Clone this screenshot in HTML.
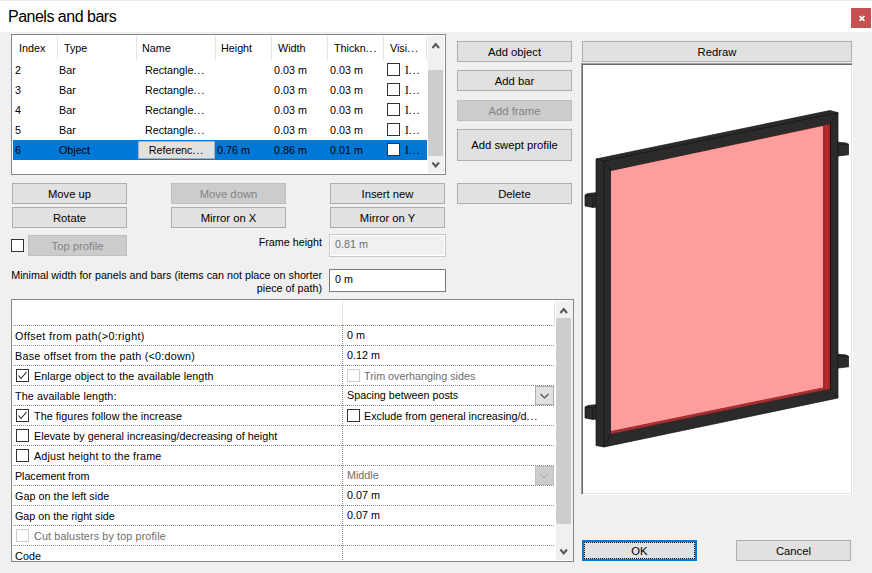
<!DOCTYPE html>
<html><head><meta charset="utf-8">
<style>
*{box-sizing:border-box;margin:0;padding:0}
html,body{width:872px;height:573px;overflow:hidden;background:#f0f0f0}
body{position:relative;font-family:"Liberation Sans",sans-serif;font-size:10.75px;color:#000}
.t{position:absolute;white-space:nowrap;line-height:13px}
.title{position:absolute;left:0;top:0;width:872px;height:32px;background:#fff;border-top:1px solid #ececec}
.title span{position:absolute;left:8px;top:6px;font-size:16px;line-height:19px;letter-spacing:-0.5px;color:#000}
.close{position:absolute;left:851px;top:8px;width:20px;height:20px;background:#c75050}
.btn{position:absolute;padding-top:1px;font-size:11.25px;background:#e1e1e1;border:1px solid #adadad;text-align:center;color:#000;white-space:nowrap}
.btn.dis{background:#cccccc;border-color:#bfbfbf;color:#838383}
.box{position:absolute;background:#fff;border:1px solid #828790}
.cb{position:absolute;width:13px;height:13px;border:1px solid #333;background:#fff}
.sb{position:absolute;background:#f0f0f0}
.th{position:absolute;background:#cdcdcd}
.dl{position:absolute;height:1px;background-image:linear-gradient(to right,#8a8a8a 50%,transparent 50%);background-size:2px 1px}
.dv{position:absolute;width:1px;background-image:linear-gradient(to bottom,#8a8a8a 50%,transparent 50%);background-size:1px 2px}
</style></head><body>
<div class="title"><span>Panels and bars</span></div>
<div class="close"><svg width="20" height="20" style="position:absolute;left:0;top:0"><path d="M8.6 8L13.4 12.8M13.4 8L8.6 12.8" stroke="#fff" stroke-width="1.7"/></svg></div>

<!-- list -->
<div class="box" style="left:11px;top:34px;width:435px;height:141px"></div>
<!-- header separators -->
<div style="position:absolute;left:57px;top:36px;width:1px;height:24px;background:#e5e5e5"></div>
<div style="position:absolute;left:136px;top:36px;width:1px;height:24px;background:#e5e5e5"></div>
<div style="position:absolute;left:215px;top:36px;width:1px;height:24px;background:#e5e5e5"></div>
<div style="position:absolute;left:271px;top:36px;width:1px;height:24px;background:#e5e5e5"></div>
<div style="position:absolute;left:327px;top:36px;width:1px;height:24px;background:#e5e5e5"></div>
<div style="position:absolute;left:383px;top:36px;width:1px;height:24px;background:#e5e5e5"></div>
<div style="position:absolute;left:426px;top:36px;width:1px;height:24px;background:#e5e5e5"></div>
<div class="t" style="left:19px;top:42px">Index</div>
<div class="t" style="left:64px;top:42px">Type</div>
<div class="t" style="left:142px;top:42px">Name</div>
<div class="t" style="left:221px;top:42px">Height</div>
<div class="t" style="left:278px;top:42px">Width</div>
<div class="t" style="left:334px;top:42px">Thickn<span style="letter-spacing:0.9px">...</span></div>
<div class="t" style="left:390px;top:42px">Visi<span style="letter-spacing:0.9px">...</span></div>

<div class="t" style="left:15px;top:64px">2</div><div class="t" style="left:59px;top:64px">Bar</div><div class="t" style="left:145px;top:64px">Rectangle<span style="letter-spacing:0.9px">...</span></div><div class="t" style="left:274px;top:64px">0.03 m</div><div class="t" style="left:330px;top:64px">0.03 m</div><div class="cb" style="left:387px;top:63px"></div><div class="t" style="left:405px;top:64px"><span style="font-family:'Liberation Serif',serif;font-size:11.5px">I</span><span style="letter-spacing:0.9px">...</span></div>
<div class="t" style="left:15px;top:84px">3</div><div class="t" style="left:59px;top:84px">Bar</div><div class="t" style="left:145px;top:84px">Rectangle<span style="letter-spacing:0.9px">...</span></div><div class="t" style="left:274px;top:84px">0.03 m</div><div class="t" style="left:330px;top:84px">0.03 m</div><div class="cb" style="left:387px;top:83px"></div><div class="t" style="left:405px;top:84px"><span style="font-family:'Liberation Serif',serif;font-size:11.5px">I</span><span style="letter-spacing:0.9px">...</span></div>
<div class="t" style="left:15px;top:104px">4</div><div class="t" style="left:59px;top:104px">Bar</div><div class="t" style="left:145px;top:104px">Rectangle<span style="letter-spacing:0.9px">...</span></div><div class="t" style="left:274px;top:104px">0.03 m</div><div class="t" style="left:330px;top:104px">0.03 m</div><div class="cb" style="left:387px;top:103px"></div><div class="t" style="left:405px;top:104px"><span style="font-family:'Liberation Serif',serif;font-size:11.5px">I</span><span style="letter-spacing:0.9px">...</span></div>
<div class="t" style="left:15px;top:124px">5</div><div class="t" style="left:59px;top:124px">Bar</div><div class="t" style="left:145px;top:124px">Rectangle<span style="letter-spacing:0.9px">...</span></div><div class="t" style="left:274px;top:124px">0.03 m</div><div class="t" style="left:330px;top:124px">0.03 m</div><div class="cb" style="left:387px;top:123px"></div><div class="t" style="left:405px;top:124px"><span style="font-family:'Liberation Serif',serif;font-size:11.5px">I</span><span style="letter-spacing:0.9px">...</span></div>
<!-- selected -->
<div style="position:absolute;left:13px;top:140px;width:414px;height:20px;background:#0078d7"></div>
<div class="btn" style="left:138px;top:141px;width:77px;height:18px;line-height:16px;padding-top:0;font-size:10.75px">Referenc<span style="letter-spacing:0.9px">...</span></div>
<div class="t" style="left:15px;top:144px">6</div><div class="t" style="left:59px;top:144px">Object</div><div class="t" style="left:217px;top:144px">0.76 m</div><div class="t" style="left:274px;top:144px">0.86 m</div><div class="t" style="left:330px;top:144px">0.01 m</div><div class="cb" style="left:387px;top:143px"></div><div class="t" style="left:405px;top:144px"><span style="font-family:'Liberation Serif',serif;font-size:11.5px">I</span><span style="letter-spacing:0.9px">...</span></div>
<!-- list scrollbar -->
<div class="sb" style="left:428px;top:36px;width:16px;height:137px"></div>
<div class="th" style="left:428px;top:70px;width:15px;height:86px"></div>
<svg style="position:absolute;left:427px;top:38px" width="17" height="14"><path d="M5.4 10L8.7 6L12 10" stroke="#555" stroke-width="2" fill="none"/></svg>
<svg style="position:absolute;left:427px;top:158px" width="17" height="14"><path d="M5.4 4.5L8.7 8.5L12 4.5" stroke="#555" stroke-width="2" fill="none"/></svg>

<!-- right buttons -->
<div class="btn" style="left:457px;top:41px;width:115px;height:21px;line-height:19px">Add object</div>
<div class="btn" style="left:457px;top:70px;width:115px;height:21px;line-height:19px">Add bar</div>
<div class="btn dis" style="left:457px;top:100px;width:115px;height:21px;line-height:19px">Add frame</div>
<div class="btn" style="left:457px;top:129px;width:115px;height:32px;line-height:28px">Add swept profile</div>

<div class="btn" style="left:582px;top:41px;width:270px;height:21px;line-height:19px">Redraw</div>

<!-- buttons rows -->
<div class="btn" style="left:12px;top:183px;width:115px;height:21px;line-height:19px">Move up</div>
<div class="btn dis" style="left:171px;top:183px;width:115px;height:21px;line-height:19px">Move down</div>
<div class="btn" style="left:330px;top:183px;width:115px;height:21px;line-height:19px">Insert new</div>
<div class="btn" style="left:457px;top:183px;width:115px;height:21px;line-height:19px">Delete</div>
<div class="btn" style="left:12px;top:207px;width:115px;height:21px;line-height:19px">Rotate</div>
<div class="btn" style="left:171px;top:207px;width:115px;height:21px;line-height:19px">Mirror on X</div>
<div class="btn" style="left:330px;top:207px;width:115px;height:21px;line-height:19px">Mirror on Y</div>
<div class="cb" style="left:11px;top:239px"></div>
<div class="btn dis" style="left:28px;top:235px;width:99px;height:21px;line-height:19px">Top profile</div>
<div class="t" style="right:550px;top:236px">Frame height</div>
<div style="position:absolute;left:329px;top:234px;width:117px;height:23px;border:1px solid #c8c8c8;background:#f0f0f0;box-shadow:inset 0 0 0 1px #fff"></div>
<div class="t" style="left:335px;top:238px;color:#6d6d6d">0.81 m</div>
<div class="t" style="right:550px;top:269px;text-align:right">Minimal width for panels and bars (items can not place on shorter<br>piece of path)</div>
<div style="position:absolute;left:329px;top:269px;width:117px;height:23px;border:1px solid #7a7a7a;background:#fff"></div>
<div class="t" style="left:335px;top:273px">0 m</div>

<!-- property grid -->
<div class="box" style="left:11px;top:299px;width:563px;height:263px"></div>
<div style="position:absolute;left:342px;top:301px;width:1px;height:24px;background:#e3e3e3"></div>
<div style="position:absolute;left:554px;top:301px;width:1px;height:24px;background:#e3e3e3"></div>
<div class="dl" style="left:13px;top:325px;width:329px"></div>
<div class="dl" style="left:343px;top:325px;width:212px"></div>
<div class="dv" style="left:342px;top:325px;height:21px"></div>
<div class="t" style="left:15px;top:330px;letter-spacing:0.37px">Offset from path(&gt;0:right)</div>
<div class="t" style="left:347px;top:329px">0 m</div>
<div class="dl" style="left:13px;top:345px;width:329px"></div>
<div class="dl" style="left:343px;top:345px;width:212px"></div>
<div class="dv" style="left:342px;top:345px;height:21px"></div>
<div class="t" style="left:15px;top:350px;letter-spacing:0.26px">Base offset from the path (&lt;0:down)</div>
<div class="t" style="left:347px;top:349px">0.12 m</div>
<div class="dl" style="left:13px;top:365px;width:329px"></div>
<div class="dl" style="left:343px;top:365px;width:212px"></div>
<div class="dv" style="left:342px;top:365px;height:21px"></div>
<div class="cb" style="left:16px;top:369px;border-color:#333"></div>
<svg style="position:absolute;left:16px;top:369px" width="13" height="13"><path d="M2.5 6.5L5 9.5L10.5 3" stroke="#222" stroke-width="1.1" fill="none"/></svg>
<div class="t" style="left:34px;top:370px;color:#000;letter-spacing:0.085px">Enlarge object to the available length</div>
<div class="cb" style="left:347px;top:369px;border-color:#cccccc"></div>
<div class="t" style="left:364px;top:370px;color:#6d6d6d">Trim overhanging sides</div>
<div class="dl" style="left:13px;top:385px;width:329px"></div>
<div class="dl" style="left:343px;top:385px;width:212px"></div>
<div class="dv" style="left:342px;top:385px;height:21px"></div>
<div class="t" style="left:15px;top:390px;letter-spacing:0.11px">The available length:</div>
<div class="t" style="left:347px;top:389px">Spacing between posts</div>
<div style="position:absolute;left:535px;top:386px;width:19px;height:19px;background:#e1e1e1;border:1px solid #adadad"></div>
<svg style="position:absolute;left:535px;top:386px" width="19" height="19"><path d="M5.5 8L9.5 12L13.5 8" stroke="#505050" stroke-width="1.2" fill="none"/></svg>
<div class="dl" style="left:13px;top:405px;width:329px"></div>
<div class="dl" style="left:343px;top:405px;width:212px"></div>
<div class="dv" style="left:342px;top:405px;height:21px"></div>
<div class="cb" style="left:16px;top:409px;border-color:#333"></div>
<svg style="position:absolute;left:16px;top:409px" width="13" height="13"><path d="M2.5 6.5L5 9.5L10.5 3" stroke="#222" stroke-width="1.1" fill="none"/></svg>
<div class="t" style="left:34px;top:410px;color:#000;letter-spacing:0.07px">The figures follow the increase</div>
<div class="cb" style="left:347px;top:409px"></div>
<div class="t" style="left:364px;top:410px">Exclude from general increasing/d<span style="letter-spacing:0.9px">...</span></div>
<div class="dl" style="left:13px;top:425px;width:329px"></div>
<div class="dl" style="left:343px;top:425px;width:212px"></div>
<div class="dv" style="left:342px;top:425px;height:21px"></div>
<div class="cb" style="left:16px;top:429px;border-color:#333"></div>
<div class="t" style="left:34px;top:430px;color:#000;letter-spacing:0.05px">Elevate by general increasing/decreasing of height</div>
<div class="dl" style="left:13px;top:445px;width:329px"></div>
<div class="dl" style="left:343px;top:445px;width:212px"></div>
<div class="dv" style="left:342px;top:445px;height:21px"></div>
<div class="cb" style="left:16px;top:449px;border-color:#333"></div>
<div class="t" style="left:34px;top:450px;color:#000;letter-spacing:0.19px">Adjust height to the frame</div>
<div class="dl" style="left:13px;top:465px;width:329px"></div>
<div class="dl" style="left:343px;top:465px;width:212px"></div>
<div class="dv" style="left:342px;top:465px;height:21px"></div>
<div class="t" style="left:15px;top:470px;letter-spacing:-0.07px">Placement from</div>
<div class="t" style="left:347px;top:469px;color:#6d6d6d">Middle</div>
<div style="position:absolute;left:535px;top:466px;width:19px;height:19px;background:#cccccc;border:1px solid #bfbfbf"></div>
<svg style="position:absolute;left:535px;top:466px" width="18" height="19"><path d="M5 8L9 12L13 8" stroke="#a0a0a0" stroke-width="1" fill="none"/></svg>
<div class="dl" style="left:13px;top:485px;width:329px"></div>
<div class="dl" style="left:343px;top:485px;width:212px"></div>
<div class="dv" style="left:342px;top:485px;height:21px"></div>
<div class="t" style="left:15px;top:490px;letter-spacing:0.05px">Gap on the left side</div>
<div class="t" style="left:347px;top:489px">0.07 m</div>
<div class="dl" style="left:13px;top:505px;width:329px"></div>
<div class="dl" style="left:343px;top:505px;width:212px"></div>
<div class="dv" style="left:342px;top:505px;height:21px"></div>
<div class="t" style="left:15px;top:510px">Gap on the right side</div>
<div class="t" style="left:347px;top:509px">0.07 m</div>
<div class="dl" style="left:13px;top:525px;width:329px"></div>
<div class="dl" style="left:343px;top:525px;width:212px"></div>
<div class="dv" style="left:342px;top:525px;height:21px"></div>
<div class="cb" style="left:16px;top:529px;border-color:#cccccc"></div>
<div class="t" style="left:34px;top:530px;color:#6d6d6d;letter-spacing:0.14px">Cut balusters by top profile</div>
<div class="dl" style="left:13px;top:545px;width:329px"></div>
<div class="dl" style="left:343px;top:545px;width:212px"></div>
<div class="dv" style="left:342px;top:545px;height:16px"></div>
<div class="t" style="left:15px;top:550px;letter-spacing:0.12px">Code</div>
<div class="sb" style="left:556px;top:301px;width:17px;height:259px"></div>
<div class="th" style="left:556px;top:318px;width:15px;height:206px"></div>
<svg style="position:absolute;left:555px;top:303px" width="17" height="14"><path d="M5.4 10L8.7 6L12 10" stroke="#555" stroke-width="2" fill="none"/></svg>
<svg style="position:absolute;left:555px;top:545px" width="17" height="14"><path d="M5.4 4.5L8.7 8.5L12 4.5" stroke="#555" stroke-width="2" fill="none"/></svg>

<!-- preview -->
<div style="position:absolute;left:581px;top:63px;width:272px;height:432px;background:#fff;border-top:1px solid #a0a0a0;border-left:1px solid #a0a0a0;border-right:1px solid #fff;border-bottom:1px solid #fff;box-shadow:inset 1px 1px 0 #696969,inset -1px -1px 0 #e3e3e3"></div>
<svg style="position:absolute;left:0;top:0" width="872" height="573">
  <g stroke="#121212" stroke-width="0.7" stroke-linejoin="round">
  <!-- pegs -->
  <polygon points="585,195 588,193.5 603,192 603,206 593,207.5 585,206" fill="#2c2c2c"/>
  <polyline points="585,195 593,196 603,193.5" fill="none"/><line x1="593" y1="196" x2="593" y2="207.5"/>
  <polygon points="585,407 588,405.5 603,404 603,418 593,419.5 585,418" fill="#2c2c2c"/>
  <polyline points="585,407 593,408 603,405.5" fill="none"/><line x1="593" y1="408" x2="593" y2="419.5"/>
  <polygon points="830,143.5 838,142.3 845,142.8 848.5,144 848.5,154.8 838,156 830,156" fill="#2c2c2c"/>
  <polyline points="838,144 848.5,145" fill="none"/>
  <polygon points="830,355.5 838,354.3 845,354.8 848.5,356 848.5,366.8 838,368 830,368" fill="#2c2c2c"/>
  <polyline points="838,356 848.5,357" fill="none"/>
  <!-- frame -->
  <polygon points="596,159 830,110.5 838,112.7 838,398 604,447 596,445.5" fill="#2b2b2b"/>
  <polyline points="596,159 604,161 838,112.7" fill="none"/>
  <line x1="604" y1="161" x2="604" y2="447"/>
  <line x1="604" y1="161" x2="611" y2="171"/>
  <line x1="838" y1="112.7" x2="830" y2="124"/>
  <line x1="838" y1="398" x2="830" y2="389"/>
  <line x1="604" y1="447" x2="611" y2="434"/>
  </g>
  <polygon points="611,171 830,124 830,389 611,434" fill="#9e2a2a"/>
  <line x1="826.5" y1="125" x2="826.5" y2="388" stroke="#c82626" stroke-width="2"/>
  <polygon points="611,171 823,126 823,387.5 611,431" fill="#fe9d9d"/>
  <line x1="611" y1="432.5" x2="823" y2="388.5" stroke="#a83232" stroke-width="1.4"/>
  <line x1="830.5" y1="124" x2="830.5" y2="389" stroke="#141414" stroke-width="1"/>
</svg>

<!-- OK/Cancel -->
<div class="btn" style="left:582px;top:540px;width:115px;height:21px;line-height:17px;border:2px solid #0078d7"><div style="position:absolute;left:0;top:0;right:0;bottom:0;border:1px dotted #000"></div>OK</div>
<div class="btn" style="left:736px;top:540px;width:115px;height:21px;line-height:19px">Cancel</div>
</body></html>
